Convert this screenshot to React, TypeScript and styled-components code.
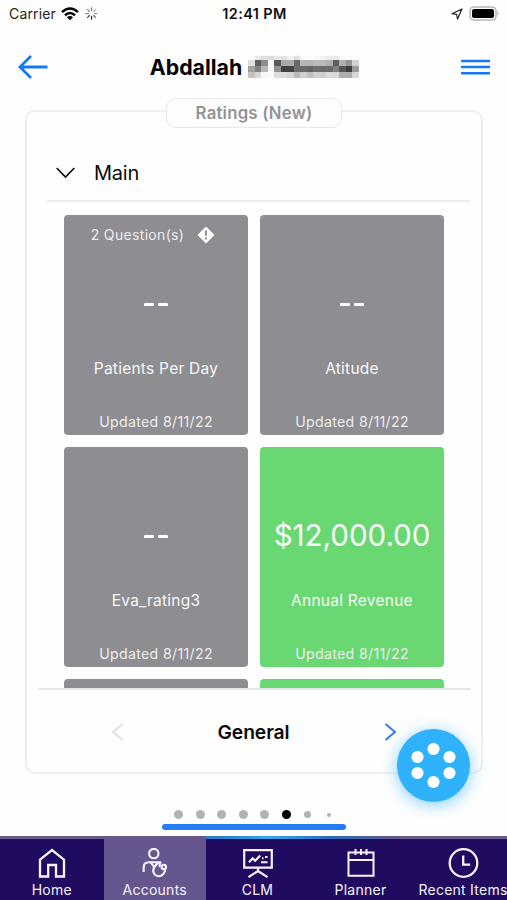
import React from 'react';
import styled, { createGlobalStyle } from 'styled-components';

const GlobalStyle = createGlobalStyle`
  * { box-sizing: border-box; }
  html, body { margin: 0; background: #fefefe; }
  body { font-family: Inter, "Liberation Sans", sans-serif; color: #0a0a0a; overflow: hidden; }
  svg { display: block; flex: none; }
`;

const Screen = styled.div`
  position: relative;
  width: 507px;
  height: 900px;
  display: flex;
  flex-direction: column;
  overflow: hidden;
`;

const StatusBar = styled.header`
  height: 27px;
  display: grid;
  grid-template-columns: 1fr auto 1fr;
  align-items: center;
  padding: 0 7px 0 9px;
  font-size: 14px;
  color: #222;
`;

const StatusGroup = styled.div<{ $end?: boolean }>`
  display: flex;
  align-items: center;
  justify-content: ${p => (p.$end ? 'flex-end' : 'flex-start')};
  gap: ${p => (p.$end ? 6 : 5.5)}px;
`;

const Carrier = styled.span`
  letter-spacing: 0.15px;
`;

const Clock = styled.time`
  font-weight: 600;
  font-size: 14.5px;
  letter-spacing: 0.35px;
  color: #111;
`;

const NavBar = styled.div`
  height: 80px;
  flex: none;
  display: grid;
  grid-template-columns: 1fr auto 1fr;
  align-items: center;
  padding: 0 16px 0 18px;
`;

const PageTitle = styled.h1`
  margin: 0;
  display: flex;
  align-items: center;
  gap: 6px;
  font-size: 21.3px;
  font-weight: 650;
  line-height: 26px;
  color: #000;
  & > svg { margin-top: -3px; }
`;

const IconButton = styled.button<{ $end?: boolean }>`
  border: 0;
  padding: 0;
  background: none;
  color: #1479f8;
  justify-self: ${p => (p.$end ? 'end' : 'start')};
`;

const Card = styled.main`
  width: 458px;
  height: 664px;
  margin: 3px 0 0 25px;
  flex: none;
  display: flex;
  flex-direction: column;
  border: 2px solid #efeff0;
  border-radius: 10px;
`;

const CardLabel = styled.div`
  align-self: center;
  flex: none;
  width: 176px;
  height: 30px;
  margin-top: -14px;
  display: flex;
  align-items: center;
  justify-content: center;
  background: #fefefe;
  border: 1.5px solid #e9e9ea;
  border-radius: 10px;
  font-size: 16.8px;
  font-weight: 600;
  letter-spacing: 0.2px;
  color: #929295;
`;

const SectionHeader = styled.div`
  height: 74px;
  flex: none;
  margin: 0 11px 0 20px;
  padding: 18px 0 0 9px;
  display: flex;
  align-items: center;
  gap: 19px;
  border-bottom: 2px solid #eeeeef;
  font-size: 20px;
  letter-spacing: -0.25px;
`;

const TileViewport = styled.section`
  height: 488px;
  flex: none;
  margin: 0 10px 0 11px;
  padding: 13px 0 0 26px;
  overflow: hidden;
  border-bottom: 2px solid #e6e7e8;
`;

const TileGrid = styled.div`
  display: grid;
  grid-template-columns: 184px 184px;
  grid-auto-rows: 220px;
  gap: 12px;
`;

const Tile = styled.article<{ $green?: boolean }>`
  display: flex;
  flex-direction: column;
  align-items: center;
  background: ${p => (p.$green ? '#6ad872' : '#8e8d92')};
  border-radius: 4px;
  color: #f8f8f8;
`;

const Questions = styled.div`
  height: 39px;
  display: flex;
  align-items: center;
  gap: 13px;
  padding-right: 6px;
  font-size: 14px;
  letter-spacing: 0.33px;
  color: #ececee;
`;

const TileValue = styled.div`
  height: 98px;
  display: flex;
  align-items: center;
  font-size: 29.7px;
  letter-spacing: -0.1px;
`;

const EmptyValue = styled.span`
  width: 24px;
  height: 3px;
  margin-top: 3px;
  display: flex;
  gap: 4px;
  &::before, &::after { content: ''; flex: 1; background: #fff; border-radius: 1px; }
`;

const TileName = styled.div`
  height: 33px;
  line-height: 33px;
  font-size: 15.5px;
  letter-spacing: 0.25px;
`;

const Updated = styled.div`
  margin-top: auto;
  height: 26px;
  line-height: 26px;
  font-size: 14.2px;
  letter-spacing: 0.3px;
  color: #ececee;
`;

const Pager = styled.nav`
  flex: 1;
  display: flex;
  align-items: center;
  justify-content: space-between;
  padding: 2px 84px 0 83px;
  font-size: 19.3px;
  font-weight: 600;
  letter-spacing: -0.1px;
`;

const Dots = styled.div`
  height: 9px;
  flex: none;
  margin: 36px 0 0 174px;
  display: grid;
  grid-template-columns: repeat(8, 21.55px);
  align-items: center;
`;

const Dot = styled.i<{ $size: number; $active?: boolean }>`
  width: ${p => p.$size}px;
  height: ${p => p.$size}px;
  margin-left: ${p => (9 - p.$size) / 2}px;
  border-radius: 50%;
  background: ${p => (p.$active ? '#000' : '#b2b2b3')};
`;

const Progress = styled.div`
  width: 184px;
  height: 6px;
  flex: none;
  margin: 5px 0 0 162px;
  border-radius: 3px;
  background: #247cf6;
`;

const TabBar = styled.footer`
  margin-top: auto;
  height: 64px;
  flex: none;
  display: grid;
  grid-template-columns: 103.5px 102.5px 103px 103px 102px;
  background: #200b60;
  background-image: linear-gradient(90deg, #665a8a 0 29%, #2789d8 46%, #38a7ed 53%, #2a69b5 66%, #665a8a 78%);
  background-size: 100% 3px;
  background-repeat: no-repeat;
`;

const Tab = styled.a<{ $active?: boolean }>`
  display: flex;
  flex-direction: column;
  align-items: center;
  padding-top: 12px;
  color: #f6f3fc;
  background: ${p => (p.$active ? '#65578e' : 'transparent')};
  font-size: 14px;
  letter-spacing: 0.25px;
  line-height: 18px;
  white-space: nowrap;
  & > svg { margin-bottom: 2px; }
`;

const FloatingButton = styled.button`
  position: absolute;
  left: 397px;
  top: 729px;
  width: 73px;
  height: 73px;
  padding: 0;
  border: 0;
  border-radius: 50%;
  background: #30b1fb;
  box-shadow: 0 3px 16px rgba(48, 177, 251, 0.6);
`;

/* Gray levels of the redacted surname, one list per row of blocks. */
const redaction = [
  [254, 250, 249, 249, 250, 251, 252, 250, 254, 254, 254, 252, 250, 250, 251, 254, 254],
  [252, 232, 222, 219, 230, 226, 244, 225, 250, 251, 249, 242, 236, 232, 249, 250, 254],
  [223, 95, 142, 247, 88, 169, 171, 104, 183, 181, 185, 184, 176, 94, 175, 148, 210],
  [160, 128, 184, 247, 145, 66, 67, 110, 107, 101, 110, 106, 108, 130, 86, 60, 155],
  [194, 214, 248, 251, 222, 221, 214, 185, 208, 191, 210, 206, 219, 217, 175, 173, 216],
];
const rowTops = [0, 2, 6, 12, 18];
const rowHeights = [2, 4, 6, 6, 6];

const RedactedName = () => (
  <svg width="111" height="24" viewBox="0 0 111 24" shapeRendering="crispEdges">
    {redaction.map((row, y) =>
      row.map((v, x) => (
        <rect key={`${y}-${x}`} x={x * 6.53} y={rowTops[y]} width="6.6" height={rowHeights[y]} fill={`rgb(${v},${v},${v})`} />
      )),
    )}
  </svg>
);

const stroke = { fill: 'none', stroke: 'currentColor' };

const WifiIcon = () => (
  <svg width="18" height="14" viewBox="0 0 18 14" {...stroke} stroke="#000" strokeWidth="2.5">
    <path d="M1 5.2Q9-2.1 17 5.2M4 8.2Q9 3.8 14 8.2" />
    <path d="M9 13.3L5.9 10.2Q9 7.7 12.1 10.2Z" fill="#000" stroke="none" />
  </svg>
);

const Spinner = () => (
  <svg width="13" height="13" viewBox="0 0 13 13" {...stroke} strokeWidth="1.25" strokeLinecap="round">
    {[0.6, 0.35, 0.45, 0.65, 0.95, 0.8, 0.55, 0.5].map((opacity, i) => (
      <path key={i} d="M6.5.9v2.7" opacity={opacity} transform={`rotate(${i * 45} 6.5 6.5)`} />
    ))}
  </svg>
);

const BatteryIcon = () => (
  <svg width="31" height="15" viewBox="0 0 31 15">
    <rect x="1" y="1" width="26" height="13" rx="3.8" fill="#fff" stroke="#b8b8b8" strokeWidth="1.5" />
    <rect x="3" y="3" width="22" height="9" rx="2" fill="#000" />
    <path d="M28.5 5Q30.5 7.5 28.5 10Z" fill="#aaa" />
  </svg>
);

const HomeIcon = () => (
  <svg width="28" height="31" viewBox="0 0 28 31" {...stroke} strokeWidth="2.3">
    <path d="M2 11.7L14 2l12 9.7v16.8H18V17h-7.8v11.5H2Z" />
  </svg>
);

const AccountIcon = () => (
  <svg width="28" height="31" viewBox="0 0 28 31" {...stroke} strokeWidth="2.1">
    <circle cx="12.8" cy="5.6" r="4.7" />
    <path d="M2.7 24v-4.7Q2.7 14.2 8 14.2h12" />
    <path d="M9.8 14.5l3.4 4.7 3.8-4.7M13.6 18.9q-2.9 4.7.4 7.8 4.3 3.4 8.3-.7 2-2.4 1.6-4.8M20 14.2q-2.4 2.2-.8 4.7" />
    <circle cx="22.8" cy="19" r="2.2" />
  </svg>
);

const PresentationIcon = () => (
  <svg width="32" height="31" viewBox="0 0 32 31" {...stroke} strokeWidth="2.2">
    <path d="M2.2 2.2h27.6v17.5H2.2ZM16 19.7v4M6.5 29.2L16 23l9.5 6.2" />
    <path d="M7 14.3l3.7-4 2.5 2.5 5-5.2" strokeWidth="2.2" />
    <path d="M19 14.2h6.5M20 10.2h1.5M23 9h2.5" strokeWidth="2" />
  </svg>
);

const CalendarIcon = () => (
  <svg width="28" height="31" viewBox="0 0 28 31" {...stroke} strokeWidth="2">
    <path d="M1.5 4.5h25v23.3h-25ZM1.5 12h25M8.5 1v6M14 1v6M19.5 1v6" />
  </svg>
);

const ClockIcon = () => (
  <svg width="31" height="31" viewBox="0 0 31 31" {...stroke} strokeWidth="2.3">
    <circle cx="15.5" cy="15" r="13.8" />
    <path d="M15.2 7.5v9.2h7" />
  </svg>
);

type TileData = { value?: string; name: string; green?: boolean; questions?: number };
const tiles: TileData[] = [
  { name: 'Patients Per Day', questions: 2 },
  { name: 'Atitude' },
  { name: 'Eva_rating3' },
  { name: 'Annual Revenue', value: '$12,000.00', green: true },
];

const tabs = [
  { label: 'Home', icon: <HomeIcon /> },
  { label: 'Accounts', icon: <AccountIcon />, active: true },
  { label: 'CLM', icon: <PresentationIcon /> },
  { label: 'Planner', icon: <CalendarIcon /> },
  { label: 'Recent Items', icon: <ClockIcon /> },
];

export default function App() {
  return (
    <Screen>
      <GlobalStyle />
      <StatusBar>
        <StatusGroup>
          <Carrier>Carrier</Carrier>
          <WifiIcon />
          <Spinner />
        </StatusGroup>
        <Clock>12:41 PM</Clock>
        <StatusGroup $end>
          <svg width="12" height="12" viewBox="0 0 12 12" {...stroke} strokeWidth="1.2" strokeLinejoin="round">
            <path d="M11 1L1 5.7l4.6.7.9 4.6Z" />
          </svg>
          <BatteryIcon />
        </StatusGroup>
      </StatusBar>
      <NavBar>
        <IconButton aria-label="Back">
          <svg width="30" height="24" viewBox="0 0 30 24" {...stroke} strokeWidth="2.8">
            <path d="M29.5 12H2M13 1L2 12l11 11" />
          </svg>
        </IconButton>
        <PageTitle>
          Abdallah
          <RedactedName />
        </PageTitle>
        <IconButton $end aria-label="Menu">
          <svg width="31" height="17" viewBox="0 0 31 17" {...stroke} strokeWidth="2.4" strokeLinecap="round">
            <path d="M2 2h27M2 8h27M2 14.2h27" />
          </svg>
        </IconButton>
      </NavBar>
      <Card>
        <CardLabel>Ratings (New)</CardLabel>
        <SectionHeader>
          <svg width="19" height="12" viewBox="0 0 19 12" {...stroke} strokeWidth="1.6">
            <path d="M.7 1l8.8 9L18.3 1" />
          </svg>
          Main
        </SectionHeader>
        <TileViewport>
          <TileGrid>
            {tiles.map(t => (
              <Tile key={t.name} $green={t.green}>
                <Questions>
                  {t.questions && (
                    <>
                      {t.questions} Question(s)
                      <svg width="18" height="18" viewBox="0 0 18 18">
                        <rect x="3" y="3" width="12" height="12" rx="1" fill="#fff" transform="rotate(45 9 9)" />
                        <path d="M9 4.5v5.2M9 11.6v2" stroke="#8e8d92" strokeWidth="2" />
                      </svg>
                    </>
                  )}
                </Questions>
                <TileValue>{t.value ?? <EmptyValue aria-label="--" />}</TileValue>
                <TileName>{t.name}</TileName>
                <Updated>Updated 8/11/22</Updated>
              </Tile>
            ))}
            <Tile />
            <Tile $green />
          </TileGrid>
        </TileViewport>
        <Pager>
          <svg width="14" height="18" viewBox="0 0 14 18" fill="none" stroke="#dedede" strokeWidth="1.8">
            <path d="M12.5 1L3 9l9.5 8" />
          </svg>
          General
          <svg width="14" height="18" viewBox="0 0 14 18" fill="none" stroke="#2880f2" strokeWidth="2">
            <path d="M2.5 1L12 9l-9.5 8" />
          </svg>
        </Pager>
      </Card>
      <Dots>
        {[9, 9, 9, 9, 9, 9, 7, 4].map((size, i) => (
          <Dot key={i} $size={size} $active={i === 5} />
        ))}
      </Dots>
      <Progress />
      <TabBar>
        {tabs.map(t => (
          <Tab key={t.label} $active={t.active}>
            {t.icon}
            {t.label}
          </Tab>
        ))}
      </TabBar>
      <FloatingButton aria-label="Actions">
        <svg width="73" height="73" viewBox="0 0 73 73" fill="#fff">
          {[[36.5, 20], [52.5, 28], [52.5, 44], [36.5, 53], [20.5, 44], [20.5, 28]].map(([x, y]) => (
            <circle key={`${x}-${y}`} cx={x} cy={y} r="6.1" />
          ))}
        </svg>
      </FloatingButton>
    </Screen>
  );
}
